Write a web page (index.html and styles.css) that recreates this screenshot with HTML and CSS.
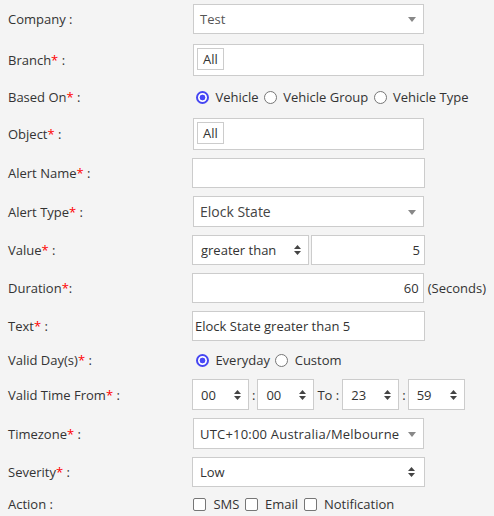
FILE: index.html
```html
<!DOCTYPE html>
<html lang="en">
<head>
    <meta charset="UTF-8">
    <title>Add Alert</title>
    <link rel="stylesheet" href="styles.css">
</head>
<body>
    <form class="alert-form">
        <div class="row row-top">
            <label class="lbl">Company :</label>
            <div class="s2"><span>Test</span></div>
        </div>
        <div class="row">
            <label class="lbl">Branch<span class="req">*</span> :</label>
            <div class="multi"><span class="tag">All</span></div>
        </div>
        <div class="row opts-row">
            <label class="lbl">Based On<span class="req">*</span> :</label>
            <div class="opts">
                <label><input type="radio" name="based" checked> Vehicle</label>
                <label><input type="radio" name="based"> Vehicle Group</label>
                <label><input type="radio" name="based"> Vehicle Type</label>
            </div>
        </div>
        <div class="row">
            <label class="lbl">Object<span class="req">*</span> :</label>
            <div class="multi"><span class="tag">All</span></div>
        </div>
        <div class="row">
            <label class="lbl">Alert Name<span class="req">*</span> :</label>
            <input class="field" type="text">
        </div>
        <div class="row">
            <label class="lbl">Alert Type<span class="req">*</span> :</label>
            <div class="s2 s2-big"><span>Elock State</span></div>
        </div>
        <div class="row">
            <label class="lbl">Value<span class="req">*</span> :</label>
            <select class="sel sel-op">
                <option>greater than</option>
            </select>
            <input class="field field-val" type="text" value="5">
        </div>
        <div class="row">
            <label class="lbl">Duration<span class="req">*</span>:</label>
            <input class="field num" type="text" value="60">
            <span class="unit">(Seconds)</span>
        </div>
        <div class="row">
            <label class="lbl">Text<span class="req">*</span> :</label>
            <input class="field" type="text" value="Elock State greater than 5">
        </div>
        <div class="row opts-row days-row">
            <label class="lbl">Valid Day(s)<span class="req">*</span> :</label>
            <div class="opts">
                <label><input type="radio" name="days" checked> Everyday</label>
                <label><input type="radio" name="days"> Custom</label>
            </div>
        </div>
        <div class="row">
            <label class="lbl">Valid Time From<span class="req">*</span> :</label>
            <select class="sel sel-time"><option>00</option></select>
            <span class="sep">:</span>
            <select class="sel sel-time"><option>00</option></select>
            <span class="sep sep-to">To :</span>
            <select class="sel sel-time"><option>23</option></select>
            <span class="sep">:</span>
            <select class="sel sel-time"><option>59</option></select>
        </div>
        <div class="row">
            <label class="lbl">Timezone<span class="req">*</span> :</label>
            <div class="s2 s2-tz"><span>UTC+10:00 Australia/Melbourne</span></div>
        </div>
        <div class="row">
            <label class="lbl">Severity<span class="req">*</span> :</label>
            <select class="sel sel-full"><option>Low</option></select>
        </div>
        <div class="row checks-row">
            <label class="lbl">Action :</label>
            <div class="checks">
                <label><input type="checkbox"> SMS</label>
                <label><input type="checkbox"> Email</label>
                <label><input type="checkbox"> Notification</label>
            </div>
        </div>
    </form>
</body>
</html>
```

FILE: styles.css
```css
body {
    margin: 0;
    padding: 4px 8px 0;
    background-color: #f4f4f4;
    font: 13px "Open Sans", "Liberation Sans", sans-serif;
    color: #333;
}
.row {
    display: flex;
    align-items: center;
    margin-bottom: 8px;
}
.row-top {
    margin-bottom: 10px;
}
.lbl {
    width: 184px;
    flex: none;
}
.req {
    color: #f00;
}

/* plain text inputs */
.field {
    width: 233px;
    height: 30px;
    box-sizing: border-box;
    margin: 0;
    padding: 0 2px;
    border: 1px solid #ccc;
    background-color: #fff;
    font: inherit;
    color: #333;
    outline: none;
}
.field-val {
    width: 114px;
    margin-left: 2px;
    padding-right: 4px;
    text-align: right;
}
.num {
    padding-right: 4px;
    text-align: right;
}
.unit {
    margin-left: 4px;
}

/* select2 style boxes */
.s2 {
    position: relative;
    display: flex;
    align-items: center;
    width: 231px;
    height: 30px;
    box-sizing: border-box;
    margin-left: 1px;
    padding-left: 6px;
    border: 1px solid #ccc;
    background-color: #fff;
    color: #555;
}
.s2::after {
    content: "";
    position: absolute;
    right: 7px;
    top: 50%;
    margin-top: -2px;
    border-left: 4px solid transparent;
    border-right: 4px solid transparent;
    border-top: 5px solid #888;
}
.s2-big {
    height: 31px;
    font-size: 14px;
    color: #444;
}
.s2-tz {
    height: 31px;
    letter-spacing: 0.2px;
    color: #333;
}
.multi {
    width: 231px;
    height: 32px;
    box-sizing: border-box;
    margin-left: 1px;
    padding: 3px;
    border: 1px solid #ccc;
    background-color: #fff;
}
.tag {
    display: inline-block;
    height: 22px;
    line-height: 20px;
    box-sizing: border-box;
    padding: 0 5px;
    border: 1px solid #ccc;
    background-color: #fff;
}

/* native selects with up/down arrows */
.sel {
    -webkit-appearance: none;
    appearance: none;
    height: 30px;
    box-sizing: border-box;
    margin: 0;
    padding: 0 16px 0 8px;
    border: 1px solid #ccc;
    border-radius: 0;
    background: #fff url("data:image/svg+xml,%3Csvg xmlns='http://www.w3.org/2000/svg' width='7' height='10'%3E%3Cpath d='M3.5 0 7 4H0zM0 6h7l-3.5 4z' fill='%23444'/%3E%3C/svg%3E") no-repeat right 7px center;
    font: inherit;
    color: #333;
    outline: none;
}
.sel-op {
    width: 117px;
}
.sel-time {
    width: 57px;
    height: 31px;
}
.sel-full {
    width: 233px;
    padding-left: 7px;
    background-position: right 9px center;
}
.sep {
    margin: 0 2px 0 3px;
}
.sep-to {
    margin: 0 3px;
}

/* radios and checkboxes */
.opts-row {
    height: 26px;
}
.days-row {
    height: 22px;
}
.checks-row {
    height: 18px;
    margin-bottom: 0;
}
.opts {
    padding-left: 3px;
}
.opts label + label,
.checks label + label {
    margin-left: 1px;
}
input[type="radio"] {
    -webkit-appearance: none;
    appearance: none;
    width: 13px;
    height: 13px;
    box-sizing: border-box;
    margin: 0 3px 0 1px;
    border: 1px solid #767676;
    border-radius: 50%;
    background-color: #fff;
    vertical-align: -2px;
}
input[type="radio"]:checked {
    border: 2px solid #4646f2;
    background: radial-gradient(circle, #4848f8 0 2.6px, #fff 3.2px);
}
input[type="checkbox"] {
    -webkit-appearance: none;
    appearance: none;
    width: 13px;
    height: 13px;
    box-sizing: border-box;
    margin: 0 4px 0 1px;
    border: 1px solid #767676;
    border-radius: 2px;
    background-color: #fff;
    vertical-align: -2px;
}
```
